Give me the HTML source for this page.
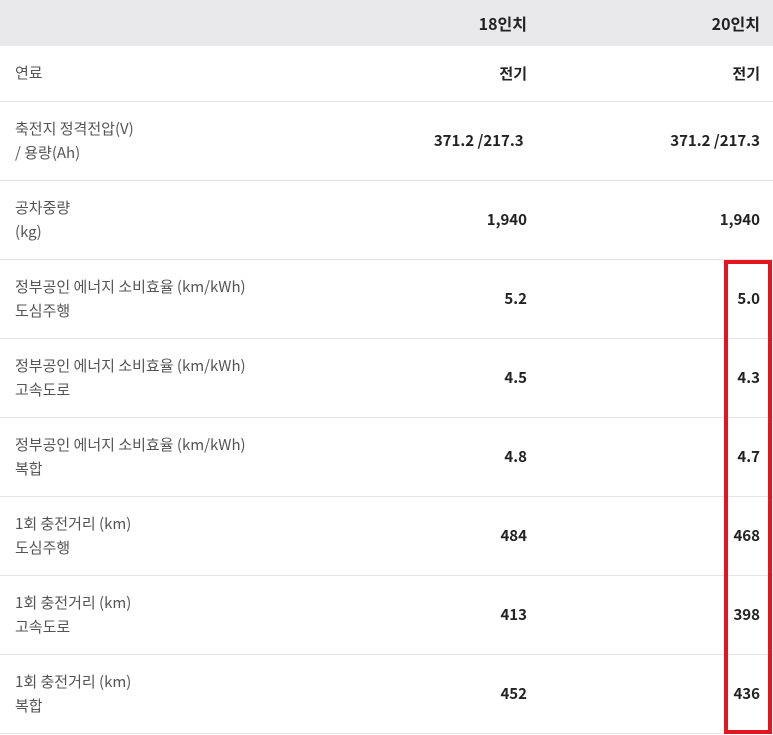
<!DOCTYPE html>
<html><head><meta charset="utf-8"><style>
body{margin:0;width:773px;height:735px;background:#fff;font-family:"Noto Sans CJK KR","Liberation Sans",sans-serif;position:relative;overflow:hidden}
.hd{position:absolute;left:0;top:0;width:773px;height:46px;background:#e9e9eb}
.row{position:absolute;left:0;width:773px;border-bottom:1px solid #e3e3e3}
.lab{position:absolute;left:15px;font-size:15px;color:#555;line-height:24px}
.v{position:absolute;font-size:15px;color:#222;font-weight:bold;text-align:right;width:200px;line-height:22px}
.c1{right:246px}.c2{right:13px}
.hd .v{font-size:16px}
.box{position:absolute;left:724px;top:260px;width:40px;height:466px;border:4px solid #e4151f}
</style></head><body>
<div class="hd"><div class="v c1" style="top:12px">18인치</div><div class="v c2" style="top:12px">20인치</div></div>
<div class="row" style="top:46px;height:55px"><div class="lab" style="top:15px">연료</div><div class="v c1" style="top:17px">전기</div><div class="v c2" style="top:17px">전기</div></div>
<div class="row" style="top:102px;height:78px"><div class="lab" style="top:15px">축전지 정격전압(V)<br>/ 용량(Ah)</div><div class="v c1" style="top:28px">371.2 /217.3&nbsp;</div><div class="v c2" style="top:28px">371.2 /217.3</div></div>
<div class="row" style="top:181px;height:78px"><div class="lab" style="top:15px">공차중량<br>(kg)</div><div class="v c1" style="top:28px">1,940</div><div class="v c2" style="top:28px">1,940</div></div>
<div class="row" style="top:260px;height:78px"><div class="lab" style="top:15px">정부공인 에너지 소비효율 (km/kWh)<br>도심주행</div><div class="v c1" style="top:28px">5.2</div><div class="v c2" style="top:28px">5.0</div></div>
<div class="row" style="top:339px;height:78px"><div class="lab" style="top:15px">정부공인 에너지 소비효율 (km/kWh)<br>고속도로</div><div class="v c1" style="top:28px">4.5</div><div class="v c2" style="top:28px">4.3</div></div>
<div class="row" style="top:418px;height:78px"><div class="lab" style="top:15px">정부공인 에너지 소비효율 (km/kWh)<br>복합</div><div class="v c1" style="top:28px">4.8</div><div class="v c2" style="top:28px">4.7</div></div>
<div class="row" style="top:497px;height:78px"><div class="lab" style="top:15px">1회 충전거리 (km)<br>도심주행</div><div class="v c1" style="top:28px">484</div><div class="v c2" style="top:28px">468</div></div>
<div class="row" style="top:576px;height:78px"><div class="lab" style="top:15px">1회 충전거리 (km)<br>고속도로</div><div class="v c1" style="top:28px">413</div><div class="v c2" style="top:28px">398</div></div>
<div class="row" style="top:655px;height:78px"><div class="lab" style="top:15px">1회 충전거리 (km)<br>복합</div><div class="v c1" style="top:28px">452</div><div class="v c2" style="top:28px">436</div></div>
<div class="box"></div>
</body></html>
